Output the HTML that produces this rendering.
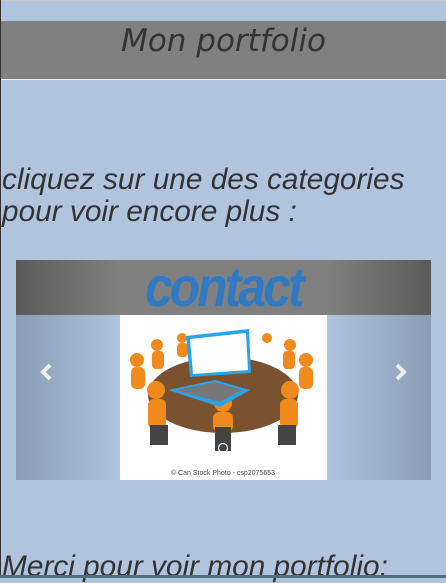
<!DOCTYPE html>
<html><head><meta charset="utf-8"><style>
html,body{margin:0;padding:0}
body{width:446px;height:578px;background:#b0c4de;position:relative;overflow:hidden;font-family:"Liberation Sans",sans-serif}
.top{position:absolute;left:0;top:0;width:446px;height:1px;background:#c8c8c8}
.lb{position:absolute;left:0;top:0;width:1px;height:578px;background:#333}
.hdr{position:absolute;left:1px;top:21px;width:445px;height:58px;background:#808080;border-bottom:1px solid #eee;text-align:center;font-family:"DejaVu Sans","Liberation Sans",sans-serif;font-style:italic;font-size:31px;color:#333;line-height:40px}
.p{position:absolute;left:2px;font-style:italic;font-size:29.8px;color:#333;line-height:32px;margin:0;white-space:nowrap}
.car{position:absolute;left:16px;top:260px;width:415px;height:220px}
.ch{position:absolute;left:0;top:0;width:415px;height:55px;background:linear-gradient(to right,#5a5a5a,#808080 25%,#808080 75%,#5a5a5a);overflow:hidden}
.ct{position:absolute;left:0;top:-2px;width:415px;text-align:center;font-weight:bold;font-style:italic;font-size:56px;color:#2f7ac2;line-height:58px;letter-spacing:-3px;transform:scaleX(0.88)}
.lc{position:absolute;left:0;top:55px;width:104px;height:165px;background:linear-gradient(to right,#8a9cb6,#b0c4de)}
.rc{position:absolute;right:0;top:55px;width:104px;height:165px;background:linear-gradient(to left,#8a9cb6,#b0c4de)}
.bot{position:absolute;left:0;top:575px;width:446px;height:3px;background:#4d7080}
</style></head><body>
<div class="top"></div><div class="lb"></div>
<div class="hdr">Mon portfolio</div>
<p class="p" style="top:164px">cliquez sur une des categories<br>pour voir encore plus :</p>
<div class="car">
<div class="ch"><div class="ct">contact</div></div>
<div class="lc"></div><div class="rc"></div>
<svg style="position:absolute;left:104px;top:55px" width="207" height="165" viewBox="0 0 207 165">
<rect width="207" height="165" fill="#fff"/>
<ellipse cx="103" cy="80" rx="75" ry="38" fill="#7a5230"/>
<g fill="#f08a1c">
<circle cx="17" cy="45" r="7"/><rect x="11" y="52" width="14" height="22" rx="5"/>
<circle cx="37" cy="30" r="6"/><rect x="32" y="36" width="12" height="18" rx="4"/>
<circle cx="62" cy="23" r="5"/><rect x="57" y="28" width="11" height="14" rx="4"/>
<circle cx="147" cy="23" r="5"/>
<circle cx="170" cy="30" r="6"/><rect x="163" y="36" width="12" height="18" rx="4"/>
<circle cx="186" cy="45" r="7"/><rect x="179" y="52" width="14" height="22" rx="5"/>
<circle cx="36" cy="75" r="9"/><rect x="28" y="84" width="18" height="30" rx="6"/>
<circle cx="170" cy="75" r="9"/><rect x="160" y="84" width="18" height="30" rx="6"/>
<circle cx="103" cy="88" r="9"/><rect x="93" y="97" width="20" height="20" rx="6"/>
</g>
<g fill="#444"><rect x="95" y="112" width="16" height="24"/><rect x="30" y="110" width="18" height="20"/><rect x="158" y="110" width="18" height="20"/></g>
<polygon points="66,21 129,14 131,58 70,62" fill="#2ba3e8"/>
<polygon points="70,24 126,18 128,55 73,59" fill="#fff"/>
<polygon points="48,75 95,65 130,75 100,92" fill="#2ba3e8"/>
<polygon points="56,75 95,67 122,75 100,87" fill="#777"/>
<circle cx="83" cy="133" r="5" fill="#fff"/>
<circle cx="103" cy="133" r="4.5" fill="none" stroke="#fff" stroke-width="1.2"/>
<circle cx="123" cy="133" r="4.5" fill="none" stroke="#fff" stroke-width="1.2"/>
<text x="103" y="160" font-size="7" text-anchor="middle" fill="#444" font-family="Liberation Sans">© Can Stock Photo - csp2075653</text>
</svg>
<svg style="position:absolute;left:22px;top:102px" width="16" height="20"><path d="M12 3 L5 10 L12 17" stroke="#eee" stroke-width="4" fill="none"/></svg>
<svg style="position:absolute;left:377px;top:102px" width="16" height="20"><path d="M4 3 L11 10 L4 17" stroke="#eee" stroke-width="4" fill="none"/></svg>
</div>
<p class="p" style="top:551px">Merci pour voir mon portfolio:</p>
<div class="bot"></div>
</body></html>
